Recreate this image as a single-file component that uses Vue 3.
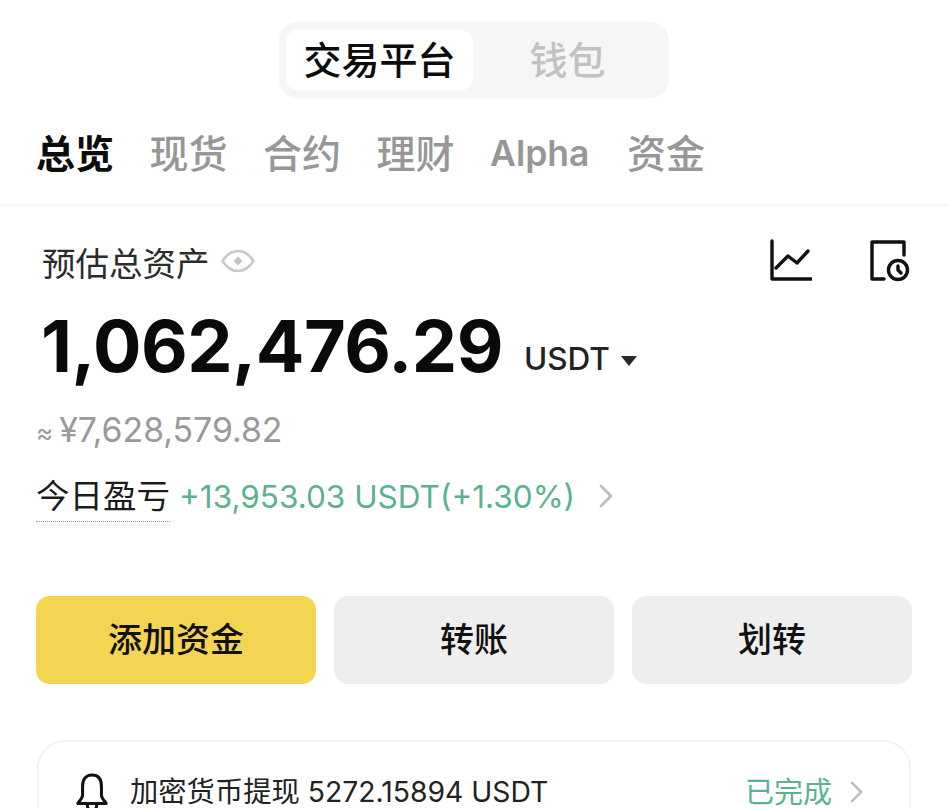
<template>
  <div class="page">
    <div class="switch-row">
      <div class="switch">
        <div class="switch-item active">交易平台</div>
        <div class="switch-item">钱包</div>
      </div>
    </div>

    <nav class="tabs">
      <span
        v-for="(tab, index) in tabs"
        :key="tab"
        class="tab"
        :class="{ current: index === 0, latin: tab === 'Alpha' }"
      >{{ tab }}</span>
    </nav>

    <section class="assets">
      <div class="label-row">
        <div class="label">
          <span>预估总资产</span>
          <svg class="eye" viewBox="0 0 34 24" fill="none">
            <path d="M1.500 12C6 5 11 2 17 2s11 3 15.500 10C28 19 23 22 17 22S6 19 1.500 12Z" stroke="#c8c8c8" stroke-width="2.600" stroke-linejoin="round" />
            <path d="M17 7.500l4.500 4.500-4.500 4.500-4.500-4.500Z" fill="#c4c4c4" />
          </svg>
        </div>
        <div class="tools">
          <svg class="tool" viewBox="0 0 44 44" fill="none" stroke="#111" stroke-width="3.400" stroke-linecap="round" stroke-linejoin="round">
            <path d="M4 2v38h39" />
            <path d="M8 29l12-12 9 7 11-12" />
          </svg>
          <svg class="tool" viewBox="0 0 44 44" fill="none" stroke="#111" stroke-width="3.400" stroke-linecap="round" stroke-linejoin="round">
            <path d="M16 40H4V3h32v13" />
            <circle cx="30" cy="31" r="9.500" />
            <path d="M30 27v4l3 3" />
          </svg>
        </div>
      </div>

      <div class="balance">
        <span class="amount">1,062,476.29</span>
        <span class="unit">USDT</span>
        <span class="caret"></span>
      </div>

      <div class="fiat"><span class="approx">≈</span>¥7,628,579.82</div>

      <div class="pnl">
        <span class="pnl-label">今日盈亏</span>
        <span class="pnl-value">+13,953.03 USDT(+1.30%)</span>
        <svg class="chevron" viewBox="0 0 14 24" fill="none">
          <path d="M2 2l10 10L2 22" stroke="#bdbdbd" stroke-width="2.800" stroke-linecap="round" stroke-linejoin="round" />
        </svg>
      </div>
    </section>

    <div class="actions">
      <button class="action primary">添加资金</button>
      <button class="action">转账</button>
      <button class="action">划转</button>
    </div>

    <div class="notice">
      <svg class="bell" viewBox="0 0 36 44" fill="none" stroke="#111" stroke-width="3.200" stroke-linejoin="round" stroke-linecap="round">
        <path d="M18 3c-7 0-10 5-10 12v9c0 3-3 6-5 9h30c-2-3-5-6-5-9v-9c0-7-3-12-10-12Z" />
        <path d="M13 34c0 4 2 7 5 7s5-3 5-7" />
      </svg>
      <span class="notice-text">加密货币提现 5272.15894 USDT</span>
      <span class="notice-status">已完成</span>
      <svg class="notice-chevron" viewBox="0 0 14 24" fill="none">
        <path d="M2 2l10 10L2 22" stroke="#bdbdbd" stroke-width="2.800" stroke-linecap="round" stroke-linejoin="round" />
      </svg>
    </div>
  </div>
</template>

<script setup>
const tabs = ['总览', '现货', '合约', '理财', 'Alpha', '资金']
</script>

<style>
html,
body {
  background: #fff;
  overflow: hidden;
}
</style>

<style scoped>
.page {
  width: 948px;
  height: 808px;
  overflow: hidden;
  background: #fff;
  color: #111;
  font-family: Inter, "Noto Sans CJK SC", sans-serif;
}

.switch-row {
  display: flex;
  justify-content: center;
  padding-top: 22px;
}

.switch {
  display: flex;
  width: 390px;
  height: 76px;
  padding: 8px 7px;
  box-sizing: border-box;
  background: #f6f6f6;
  border-radius: 18px;
}

.switch-item {
  display: flex;
  align-items: center;
  justify-content: center;
  flex: 1;
  padding-bottom: 5px;
  box-sizing: border-box;
  font-size: 38px;
  font-weight: 500;
  color: #c2c2c2;
  border-radius: 12px;
}

.switch-item.active {
  flex: 0 0 187px;
  background: #fff;
  color: #0c0c0c;
}

.tabs {
  display: flex;
  align-items: center;
  gap: 35.500px;
  height: 108px;
  padding: 6px 0 0 36px;
  border-bottom: 2px solid #f8f8f8;
  box-sizing: border-box;
}

.tab {
  font-size: 39px;
  font-weight: 500;
  color: #979797;
  line-height: 1.2;
}

.tab.latin {
  margin-right: 2px;
  font-size: 35.500px;
  font-weight: 600;
}

.tab.current {
  color: #0c0c0c;
  font-weight: 700;
}

.assets {
  padding: 0 36px;
}

.label-row {
  display: flex;
  align-items: center;
  justify-content: space-between;
  padding-top: 28px;
  height: 54px;
}

.label {
  display: flex;
  align-items: center;
  gap: 11px;
  padding-left: 6px;
  font-size: 33.500px;
  color: #2b2b2b;
}

.eye {
  width: 34px;
  height: 24px;
}

.tools {
  display: flex;
  gap: 56px;
}

.tool {
  width: 44px;
  height: 44px;
}

.balance {
  display: flex;
  align-items: center;
  margin-top: 14px;
  padding-left: 5px;
}

.amount {
  font-size: 72px;
  font-weight: 700;
  letter-spacing: -0.5px;
  color: #0a0a0a;
}

.unit {
  margin: 26px 0 0 21px;
  font-size: 31.500px;
  font-weight: 500;
  color: #222;
}

.caret {
  width: 0;
  height: 0;
  margin: 30px 0 0 11px;
  border-left: 8px solid transparent;
  border-right: 8px solid transparent;
  border-top: 10px solid #2a2a2a;
}

.fiat {
  margin-top: 20px;
  font-size: 33.800px;
  color: #9a9a9a;
}

.approx {
  margin-right: 6px;
  font-size: 26px;
}

.pnl {
  display: flex;
  align-items: center;
  margin-top: 18.500px;
}

.pnl-label {
  padding-bottom: 3px;
  font-size: 33.500px;
  color: #1c1c1c;
  border-bottom: 1.500px dotted #9a9a9a;
}

.pnl-value {
  margin-left: 9px;
  margin-top: 2px;
  font-size: 31.500px;
  color: #5bb191;
}

.chevron {
  width: 14px;
  height: 24px;
  margin: 2px 0 0 24px;
}

.actions {
  display: flex;
  gap: 18px;
  margin-top: 74px;
  padding: 0 36px;
}

.action {
  flex: 1;
  height: 88px;
  padding: 0 0 5px;
  border: 0;
  border-radius: 14px;
  background: #eeeeee;
  color: #111;
  font-family: inherit;
  font-size: 34px;
  font-weight: 500;
}

.action.primary {
  background: #f4d552;
}

.notice {
  display: flex;
  align-items: flex-start;
  height: 110px;
  margin: 56px 37px 0;
  padding: 30px 46px 0 36px;
  border: 2px solid #f3f3f3;
  border-radius: 28px;
  box-sizing: border-box;
}

.bell {
  width: 34px;
  height: 42px;
}

.notice-text {
  margin: 6px 0 0 21px;
  font-size: 28.300px;
  line-height: 1;
  color: #222;
}

.notice-status {
  margin: 6px 0 0 auto;
  font-size: 29px;
  line-height: 1;
  color: #5bb191;
}

.notice-chevron {
  width: 13px;
  height: 22px;
  margin: 9px 0 0 18px;
}
</style>
